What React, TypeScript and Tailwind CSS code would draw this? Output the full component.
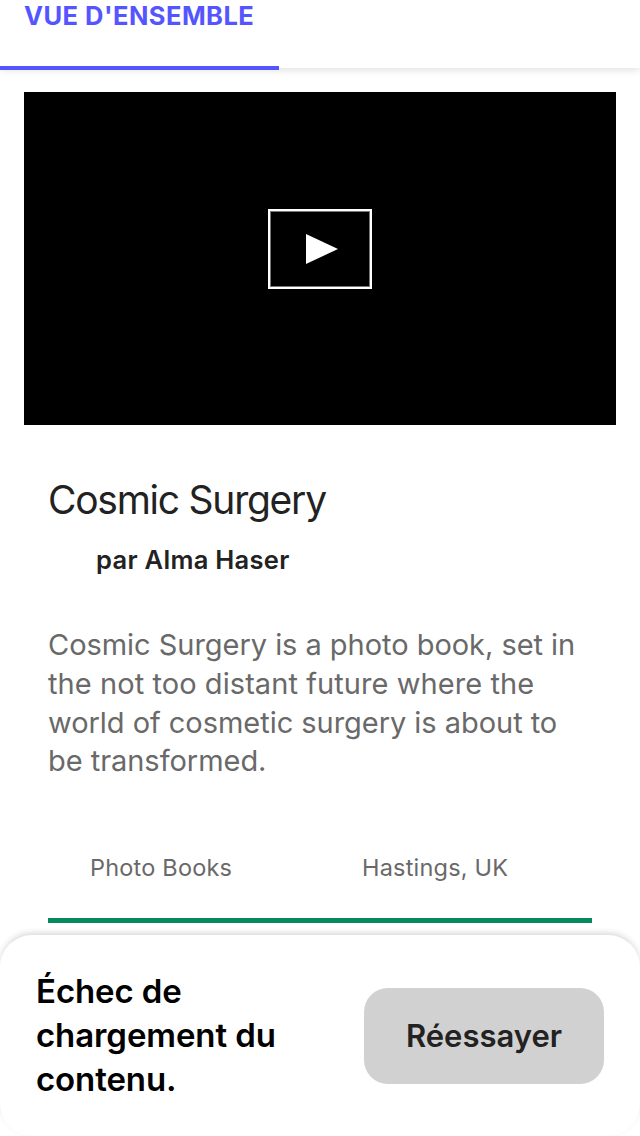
export default function App() {
  return (
    <main className="flex h-[1136px] w-[640px] flex-col overflow-hidden bg-white font-['Inter',sans-serif]">
      <nav className="flex h-[68px] shrink-0 shadow-[0_2px_8px_rgba(0,0,0,0.12)]">
        <div className="h-[70px] w-[279px] shrink-0 border-b-4 border-[#5555ff] pl-6 text-[25.5px] leading-8 font-bold tracking-[0.45px] whitespace-nowrap text-[#5555ff]">
          VUE D'ENSEMBLE
        </div>
      </nav>
      <div className="mx-6 mt-6 flex h-[333px] shrink-0 items-center justify-center bg-black">
        <button aria-label="Play" className="mt-[-19px] flex h-20 w-[104px] items-center justify-center border-2 border-white pl-1 shadow-[inset_0_0_0_1px_#777777]">
          <svg width="32" height="30" viewBox="0 0 32 30" fill="white"><path d="M0 0L32 15L0 30Z" /></svg>
        </button>
      </div>
      <section className="mx-12 flex h-[498px] shrink-0 flex-col border-b-[5px] border-[#058a5e]">
        <h1 className="mt-[51px] text-[39px] leading-[48px] tracking-[-1.25px] text-[#222222]">Cosmic Surgery</h1>
        <p className="mt-5 pl-12 text-[25.5px] leading-8 font-semibold tracking-[0.3px] text-[#222222]">par Alma Haser</p>
        <p className="mt-[50px] text-[29px] leading-[38.8px] tracking-[-0.04px] whitespace-nowrap text-[#696969]">
          Cosmic Surgery is a photo book, set in<br /><span className="tracking-[0.07px]">the not too distant future where the</span><br />world of cosmetic surgery is about to<br />be transformed.
        </p>
        <div className="mt-[71px] grid grid-cols-2 text-[23.5px] leading-8 tracking-[0.2px] text-[#696969]">
          <span className="pl-[42px]">Photo Books</span>
          <span className="pl-[42px]">Hastings, UK</span>
        </div>
      </section>
      <aside className="mt-3 flex h-[201px] shrink-0 items-center justify-between rounded-[32px] bg-white px-9 shadow-[0_-3px_6px_-1px_rgba(0,0,0,0.16)]">
        <p className="-mt-0.5 text-[33px] leading-[44px] font-semibold tracking-[-0.1px] whitespace-nowrap text-black">Échec de<br />chargement du<br />contenu.</p>
        <button className="h-24 w-60 rounded-3xl bg-[#d1d1d1] pt-0.5 text-[31px] font-semibold text-[#222222]">Réessayer</button>
      </aside>
    </main>
  );
}
